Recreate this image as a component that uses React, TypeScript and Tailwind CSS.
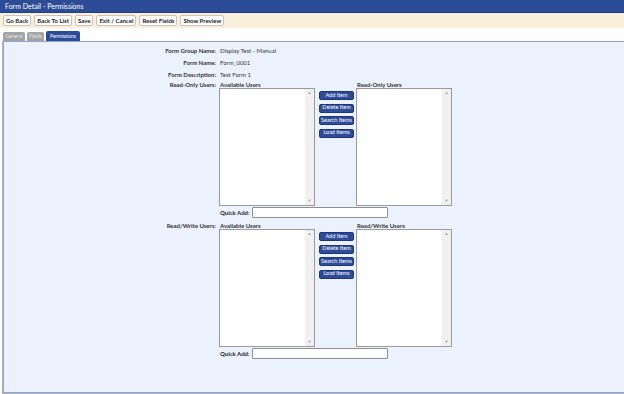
import React from "react";

const font = { fontFamily: 'Lato, "Liberation Sans", sans-serif' };

function ToolBtn({ label }: { label: string }) {
  return (
    <div className="h-[11px] px-[2px] flex items-center bg-white border border-[#c9c3b8] rounded-[2px] text-[6px] font-bold text-[#222] leading-none whitespace-nowrap">
      {label}
    </div>
  );
}

function ListBox() {
  return (
    <div className="w-[96px] h-[118px] bg-white border border-[#9a9a9a] flex justify-end">
      <div className="w-[9px] h-full bg-[#f0f0f0] flex flex-col items-center justify-between py-[2px] text-[4px] text-[#9a9a9a] leading-none">
        <span>▲</span>
        <span>▼</span>
      </div>
    </div>
  );
}

function ActBtn({ label }: { label: string }) {
  return (
    <div className="w-[35px] h-[9px] bg-[#2d4b98] border border-[#1e3577] rounded-[2px] text-white text-[5.5px] leading-none flex items-center justify-center whitespace-nowrap">
      {label}
    </div>
  );
}

function Section({ label, right }: { label: string; right: string }) {
  return (
    <div className="flex">
      <div className="w-[212px] text-right text-[6px] font-bold text-[#333] leading-[7px] whitespace-nowrap">
        {label}
      </div>
      <div className="ml-[3px] flex flex-col">
        <div className="flex">
          <div className="flex flex-col">
            <div className="text-[6px] font-bold text-[#333] leading-[7px] pl-[1px] h-[7px] whitespace-nowrap">Available Users</div>
            <ListBox />
          </div>
          <div className="ml-[4px] mr-[2px] pt-[10px] flex flex-col gap-[3.5px]">
            <ActBtn label="Add Item" />
            <ActBtn label="Delete Item" />
            <ActBtn label="Search Items" />
            <ActBtn label="Load Items" />
          </div>
          <div className="flex flex-col">
            <div className="text-[6px] font-bold text-[#333] leading-[7px] pl-[1px] h-[7px] whitespace-nowrap">{right}</div>
            <ListBox />
          </div>
        </div>
        <div className="flex items-center mt-[1px] h-[11px]">
          <span className="text-[6px] font-bold text-[#222] pl-[1px] w-[33px] whitespace-nowrap">Quick Add:</span>
          <div className="w-[136px] h-[11px] bg-white border border-[#8f8f8f] rounded-[1px]" />
        </div>
      </div>
    </div>
  );
}

function InfoRow({ label, value }: { label: string; value: string }) {
  return (
    <div className="flex h-[12px] items-center">
      <div className="w-[212px] text-right text-[6px] font-bold text-[#333] whitespace-nowrap">{label}</div>
      <div className="ml-[4px] text-[6px] text-[#333] whitespace-nowrap">{value}</div>
    </div>
  );
}

export default function App() {
  return (
    <div style={font} className="w-[624px] h-[394px] overflow-hidden bg-white flex flex-col">
      <div className="h-[13px] bg-[#2d4c98] border-b border-[#203d84] flex items-center pl-[5px] text-white text-[7px] leading-none">
        Form Detail - Permissions
      </div>
      <div className="h-[15px] bg-[#faefdd] flex items-center gap-[3px] pl-[3px]">
        <ToolBtn label="Go Back" />
        <ToolBtn label="Back To List" />
        <ToolBtn label="Save" />
        <ToolBtn label="Exit / Cancel" />
        <ToolBtn label="Reset Fields" />
        <ToolBtn label="Show Preview" />
      </div>
      <div className="h-[13px] flex items-end gap-[2px] pl-[3px]">
        <div className="h-[9px] w-[22px] bg-[#a3a3a3] rounded-t-[2px] text-[5px] text-[#e4e4e4] flex items-center justify-center leading-none">General</div>
        <div className="h-[9px] w-[17px] bg-[#a3a3a3] rounded-t-[2px] text-[5px] text-[#e4e4e4] flex items-center justify-center leading-none">Fields</div>
        <div className="h-[10px] w-[34px] bg-[#2d4c98] rounded-t-[2px] text-[5px] text-white flex items-center justify-center leading-none">Permissions</div>
      </div>
      <div className="flex-1 ml-[2px] border-l border-b border-[#b4b4b4] w-[640px] flex">
        <div className="flex-1 border-t border-l border-b border-[#8ea5d8] bg-[#ebf2fe] flex flex-col pt-[2px]">
          <InfoRow label="Form Group Name:" value="Display Test - Manual" />
          <InfoRow label="Form Name:" value="Form_0001" />
          <InfoRow label="Form Description:" value="Test Form 1" />
          <div className="mt-[1px]">
            <Section label="Read-Only Users:" right="Read-Only Users" />
          </div>
          <div className="mt-[4px]">
            <Section label="Read/Write Users:" right="Read/Write Users" />
          </div>
        </div>
      </div>
    </div>
  );
}
